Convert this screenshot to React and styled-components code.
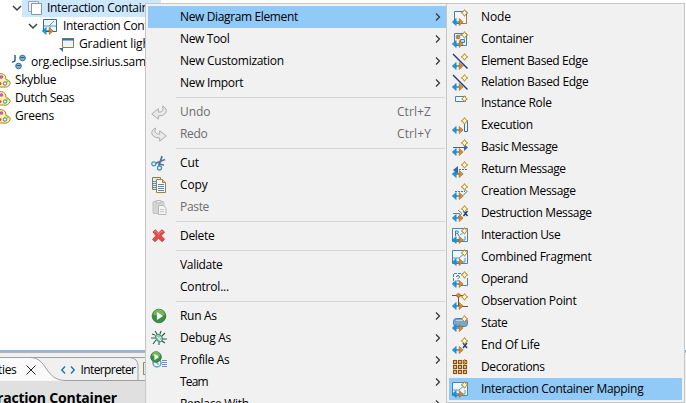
import React from 'react';
import styled, { createGlobalStyle, css } from 'styled-components';

const Global = createGlobalStyle`
  * { box-sizing: border-box; }
  body { margin: 0; background: #fff; overflow: hidden; }
`;

const Page = styled.div`
  position: relative;
  width: 686px;
  height: 403px;
  overflow: hidden;
  background: #fff;
  color: #000;
  font: 12px/16px "Open Sans", "Noto Sans", sans-serif;
  white-space: nowrap;
  display: flex;
  flex-direction: column;
`;

const Tree = styled.div`
  flex: 0 0 350px;
  width: 161px;
  overflow: hidden;
`;
const TreeRow = styled.div`
  display: flex;
  align-items: center;
  height: 18px;
  padding-left: ${(p) => p.$indent}px;
  &:first-child { margin-top: -1px; }
`;
const TreeContent = styled.div`
  display: flex;
  align-items: center;
  flex: 1;
  height: 18px;
  gap: ${(p) => p.$gap ?? 5}px;
  background: ${(p) => (p.$selected ? '#cce8ff' : 'transparent')};
  padding-left: ${(p) => p.$pad || 0}px;
`;
const Label = styled.span`
  letter-spacing: ${(p) => p.$track ?? -0.32}px;
  ${(p) => p.$disabled && css`color: #6d6d6d;`}
`;
const Svg = styled.svg`
  display: block;
  flex: none;
  overflow: visible;
`;
const Glyph = ({ children, w = 16, h = 16 }) => (
  <Svg width={w} height={h} viewBox={`0 0 ${w} ${h}`} fill="none">{children}</Svg>
);

const Panel = styled.div`
  width: 686px;
  flex: 1;
  border-top: 2px solid #99b4d1;
  box-shadow: inset 0 1px #b4b4b4;
  background: #f0f0f0;
  padding-top: 5px;
`;
const Tabs = styled.div`
  display: flex;
  position: relative;
  height: 24px;
  width: 146px;
`;
const TabArt = styled.svg`
  position: absolute;
  inset: 0;
`;
const TabText = styled.div`
  position: relative;
  display: flex;
  align-items: center;
  height: 26px;
  gap: ${(p) => p.$gap}px;
  margin-left: ${(p) => p.$left}px;
`;
const Heading = styled.div`
  height: 22px;
  width: 146px;
  overflow: hidden;
  background: #e0e0e0;
  padding-top: 7px;
  font-size: 14px;
  line-height: 20px;
  font-weight: 700;
  letter-spacing: -0.2px;
  text-indent: -3px;
`;

const Menu = styled.div`
  position: absolute;
  left: ${(p) => p.$left}px;
  top: 3px;
  width: ${(p) => p.$width}px;
  height: 400px;
  padding: 2px;
  overflow: hidden;
  background: #f1f1f1;
  border: 1px solid #c6c6c6;
  ${(p) => p.$cut && css`border-bottom: 0; padding-right: 0; border-right: 0;`}
`;
const Item = styled.div`
  display: flex;
  align-items: center;
  height: ${(p) => p.$h || 22}px;
  background: ${(p) => (p.$hot ? '#91c9f7' : 'transparent')};
  padding: 0 5px 0 3px;
`;
const IconSlot = styled.div`
  width: ${(p) => p.$w}px;
  flex: none;
`;
const Spacer = styled.div`flex: 1;`;
const Shortcut = styled.span`
  color: #6d6d6d;
  margin-right: 10px;
  letter-spacing: 0.1px;
`;
const Separator = styled.div`
  height: 7px;
  padding: 3px 1px 3px 28px;
  &::before { content: ''; display: block; height: 1px; background: #d5d5d5; }
`;

const Expander = () => (
  <Glyph w={10} h={8}><path d="M1 2l4 4 4-4" stroke="#404040" strokeWidth="1.5" /></Glyph>
);
const Submenu = () => (
  <Glyph w={6} h={10}><path d="M1 1.500L4.500 5 1 8.500" stroke="#333" strokeWidth="1.200" /></Glyph>
);

const Arrows = () => (
  <>
    <path d="M4 13h4" stroke="#1c4668" />
    <path d="M.2 13l4-3.600v7.200z" fill="#1599dc" stroke="#1273b0" strokeWidth=".5" />
    <path d="M11.200 13l-4-3.600v7.200z" fill="#d98b2d" stroke="#8b5a18" strokeWidth=".5" />
  </>
);
const Star = () => (
  <path d="M12.500.6l1.200 2 2.100 1.300-2.100 1.300-1.200 2.100-1.200-2.100-2.100-1.300 2.100-1.300z" fill="#fff7d2" stroke="#b58a20" strokeWidth="1" />
);
const Frame = () => <path d="M2.500 2.500h12v12h-12z" fill="#f4faff" stroke="#3e7fb5" />;

const bases = {
  node: <><Frame /><path d="M14.500 7v7.500H8" stroke="#a87e38" /></>,
  container: <><Frame /><circle cx="6" cy="6" r="2" fill="#d58a31" stroke="#935e20" strokeWidth=".6" /><path d="M8.500 8.500h4v3h-4zM7.500 4h3" fill="#b7dcf5" stroke="#3e7fb5" /></>,
  edge: <path d="M1 1l14.500 14.500" stroke="#203b85" strokeWidth="1.400" />,
  execution: <path d="M12.500 3.500h3v11h-3z" fill="#eaf5ff" stroke="#3b6cae" />,
  basic: <><path d="M1 8.500h12" stroke="#3b64aa" /><path d="M12 5l4 3.500-4 3.500z" fill="#3b64aa" /></>,
  returned: <><path d="M7 8.500h8" stroke="#4775b3" strokeDasharray="2 1" /><path d="M1 9l5-4v8z" fill="#3b64aa" /></>,
  creation: <><path d="M3 8.500h10" stroke="#4775b3" strokeDasharray="2 1" /><path d="M11 4.500l4 4-4 4" stroke="#4775b3" /></>,
  destruction: <><path d="M1 8.500h7M6 5l4 3.500L6 12" stroke="#5884ad" /><path d="M11.500 6l4 5m0-5l-4 5" stroke="#203b85" strokeWidth="1.500" /></>,
  use: <><path d="M.5 1.500h15v13H.5z" fill="#edf7ff" stroke="#4c83ac" /><path d="M3.500 9V4h2.300q1.200 1.200 0 2.300H3.500m2 0L7 9" stroke="#377bb2" /><path d="M8 8l5-4M5 13h8v-4" stroke="#5b98c6" /></>,
  fragment: <><path d="M.5 1.500h15v13H.5z" fill="#edf7ff" stroke="#4c83ac" /><path d="M1 9h6l6-5M8 13h5V9" stroke="#5b98c6" /></>,
  operand: <><path d="M1.500 14V2.500h13" stroke="#3a86bb" strokeDasharray="3 1" /><path d="M15.500 7v7.500H9" stroke="#4e82a7" /><path d="M4.500 6q0-1.500 1.700-1.500Q8 5 7.200 6.500L6 7.800M6 9v1.500" stroke="#23699e" /></>,
  observation: <><path d="M0 2.500h12M6.500 3v10M10 13.500h6" stroke="#6d5432" /><circle cx="6.500" cy="2.500" r="1.800" fill="#d9943f" stroke="#9b6421" /></>,
  state: <><rect x="1.500" y="3.500" width="14" height="8" rx="3" fill="#78a8cf" stroke="#477ba7" /><path d="M4 5.500h8" stroke="#b8d5ea" /></>,
  end: <path d="M11 6l4 5m0-5l-4 5" stroke="#203b85" strokeWidth="1.500" />,
};
const ToolIcon = ({ kind }) => {
  if (kind === 'instance') {
    return <Glyph><path d="M3.500 1.500h10v5h-10z" fill="#eef7ff" stroke="#4e80b5" /><path d="M12.500.8l1 1.700L15.300 4l-1.800 1-1 1.700-1-1.700L9.700 4l1.800-1.500z" fill="#fff3bf" stroke="#b58a20" /></Glyph>;
  }
  if (kind === 'decorations') {
    return (
      <Glyph>
        <path d="M0 0h16v16H0z" fill="#fff" />
        {[1.5, 6.5, 11.5].map((y) => [1.5, 6.5, 11.5].map((x) => (
          <rect key={`${x}-${y}`} x={x} y={y} width="3" height="3" fill="#ffe2a2" stroke="#875313" strokeWidth="1.300" />
        )))}
        <path d="M12.500 0v6M9.500 3h6" stroke="#c99c25" />
      </Glyph>
    );
  }
  return <Glyph>{bases[kind]}<Arrows /><Star /></Glyph>;
};

const PlayCircle = ({ r = 6.8, x = 8, y = 8 }) => (
  <>
    <circle cx={x} cy={y} r={r} fill="#379343" stroke="#257133" strokeWidth=".8" />
    <path d={`M${x - r + 1} ${y - 1}A${r - 1} ${r - 1} 0 0 1 ${x + r - 1} ${y - 1}z`} fill="#76b85b" />
    <path d={`M${x - r * 0.3} ${y - r * 0.6}L${x + r * 0.6} ${y}L${x - r * 0.3} ${y + r * 0.6}z`} fill="#fff" />
  </>
);
const UndoShape = () => <path d="M.8 10l6.500-5.300v3.500Q12 8.200 12 4.800L11.500 2Q17 5 14.500 9.200 12.300 12.200 7.300 12v3.200z" fill="#e9e9e9" stroke="#adadad" />;
const icons = {
  undo: <Glyph><UndoShape /></Glyph>,
  redo: <Glyph><g transform="translate(16 0) scale(-1 1)"><UndoShape /></g></Glyph>,
  cut: <Glyph><path d="M4 8.500l10-4M8 11l3-10M7 9l6 1" stroke="#53749c" strokeWidth="1.700" /><circle cx="2.800" cy="8.800" r="2" fill="#edf8ff" stroke="#4a91bd" strokeWidth="1.300" /><circle cx="8.500" cy="13" r="2" fill="#edf8ff" stroke="#4a91bd" strokeWidth="1.300" /></Glyph>,
  copy: <Glyph><path d="M1.500.5h8v12h-8z" fill="#dceefa" stroke="#927b45" /><path d="M2 4.500h3M2 6.500h3M2 8.500h3M2 10.500h3" stroke="#5a8fbd" /><path d="M5.500 2.500h6l3 3v10h-9z" fill="#f4faff" stroke="#a08138" /><path d="M11.500 2.500v3h3" fill="#e3c66f" stroke="#a08138" /><path d="M7 7.500h6M7 9.500h6M7 11.500h6M7 13.500h6" stroke="#5688b7" /></Glyph>,
  paste: <Glyph><rect x="2" y="2.500" width="11" height="12" rx="1" fill="#d5d5d5" stroke="#c0c0c0" /><path d="M5 3V1.500h5V4H5z" fill="#ececec" stroke="#b9b9b9" /><path d="M7.500 6.500h5l2.500 3v6H7.500z" fill="#f3f3f3" stroke="#b9b9b9" /><path d="M9 10.500h4M9 12.500h4" stroke="#c9c9c9" /></Glyph>,
  delete: <Glyph><path d="M2 4l2.200-2.200L7.500 5 11 1.800 13.500 4l-3.400 3.700 3.400 3.500-2.300 2.500-3.700-3.500L4 13.700 1.700 11.300 5 7.700z" fill="#e64b4b" stroke="#c13d41" strokeLinejoin="round" /><path d="M3 4l1.200-1 3.300 3.200L11 3l1.200 1" stroke="#f2867c" /></Glyph>,
  run: <Glyph><PlayCircle /></Glyph>,
  debug: <Glyph><path d="M4 5L1 4M4 8H0M5 10l-3 4M6 4L4 1M9 4l1-3M11 6l3-3M12 9h4M11 11l3 2M8 12v3" stroke="#285d51" strokeWidth="1.100" /><ellipse cx="8" cy="8" rx="3" ry="4" transform="rotate(-40 8 8)" fill="#9bcdb3" stroke="#438878" /><path d="M6 7l4 4M7 9l3-2" stroke="#e7f7e9" /></Glyph>,
  profile: <Glyph><circle cx="6" cy="11" r="4" fill="#eaf5ff" stroke="#6b9ebd" strokeWidth="1.500" /><path d="M6 9v3h2M11 8.500h5M11 10.500h5M11 12.500h5M11 14.500h5" stroke="#6d91be" /><PlayCircle x={5} y={5} r={5.3} /></Glyph>,
};

const Palette = () => (
  <Glyph w={11} h={15}>
    <path d="M-3 1.500Q2-1 5.500 3L6 6.500q5 1 4 4.500-2 4-7 3H-3z" fill="#fff5a0" stroke="#a2852e" />
    <circle cx="1.500" cy="4" r="1.800" fill="#c35ac4" />
    <circle cx="0" cy="10.500" r="1.500" fill="#e94545" />
    <circle cx="5" cy="10.500" r="1.700" fill="#fff" stroke="#2d78bb" />
    <circle cx="7.500" cy="8.300" r="1.200" fill="#a7c95d" />
  </Glyph>
);

const mainItems = [
  { t: 'New Diagram Element', arrow: 1, hot: 1, track: -0.37 }, { t: 'New Tool', arrow: 1, track: -0.37 },
  { t: 'New Customization', arrow: 1, track: -0.28 }, { t: 'New Import', arrow: 1 }, null,
  { t: 'Undo', icon: 'undo', off: 1, key: 'Ctrl+Z', track: -0.1 }, { t: 'Redo', icon: 'redo', off: 1, key: 'Ctrl+Y' }, null,
  { t: 'Cut', icon: 'cut', track: -0.1 }, { t: 'Copy', icon: 'copy', track: -0.1 }, { t: 'Paste', icon: 'paste', off: 1 }, null,
  { t: 'Delete', icon: 'delete' }, null,
  { t: 'Validate' }, { t: 'Control...', track: -0.2 }, null,
  { t: 'Run As', icon: 'run', arrow: 1 }, { t: 'Debug As', icon: 'debug', arrow: 1, track: -0.25 },
  { t: 'Profile As', icon: 'profile', arrow: 1 }, { t: 'Team', arrow: 1, track: -0.8 }, { t: 'Replace With', arrow: 1 },
];
const tools = [
  { t: 'Node', kind: 'node', track: -0.1 },
  { t: 'Container', kind: 'container' },
  { t: 'Element Based Edge', kind: 'edge', track: -0.38 },
  { t: 'Relation Based Edge', kind: 'edge', h: 20 },
  { t: 'Instance Role', kind: 'instance' },
  { t: 'Execution', kind: 'execution' },
  { t: 'Basic Message', kind: 'basic' },
  { t: 'Return Message', kind: 'returned', track: -0.38 },
  { t: 'Creation Message', kind: 'creation' },
  { t: 'Destruction Message', kind: 'destruction', track: -0.35 },
  { t: 'Interaction Use', kind: 'use', track: -0.4 },
  { t: 'Combined Fragment', kind: 'fragment', track: -0.24 },
  { t: 'Operand', kind: 'operand', track: -0.45 },
  { t: 'Observation Point', kind: 'observation' },
  { t: 'State', kind: 'state', track: -0.45 },
  { t: 'End Of Life', kind: 'end', track: -0.2 },
  { t: 'Decorations', kind: 'decorations', track: -0.35 },
  { t: 'Interaction Container Mapping', kind: 'fragment', hot: true, track: -0.31 },
];

export default function App() {
  return (
    <Page>
      <Global />
      <Tree>
        <TreeRow $indent={12}>
          <Expander />
          <TreeContent $selected $pad={6}>
            <Glyph w={14} h={14}><path d="M.5.5h10v10H.5z" fill="#eef2f6" stroke="#9aa3ad" /><path d="M3.500 2.500h10v11h-10z" fill="#fff" stroke="#8b96a3" /></Glyph>
            <Label>Interaction Container</Label>
          </TreeContent>
        </TreeRow>
        <TreeRow $indent={28}>
          <Expander />
          <TreeContent $pad={4}>
            <Glyph><path d="M1.500 1.500h13v12h-13z" fill="#edf7ff" stroke="#356b96" /><path d="M2 8h5l5-5M8 13V8h6" stroke="#5b98c6" /><Arrows /></Glyph>
            <Label>Interaction Container</Label>
          </TreeContent>
        </TreeRow>
        <TreeRow $indent={59}>
          <TreeContent>
            <Glyph w={15} h={15}><path d="M3.500 1.500h11v9h-11z" fill="#eaf5fd" stroke="#987b3b" /><path d="M3 2.500h12" stroke="#3570aa" strokeWidth="2" /><path d="M0 11h4v4z" fill="#276d9d" /></Glyph>
            <Label $track={-0.1}>Gradient light blue</Label>
          </TreeContent>
        </TreeRow>
        <TreeRow $indent={12}>
          <TreeContent>
            <Glyph w={14} h={16}><path d="M3 1v5q0 2-3 2" stroke="#315e89" strokeWidth="1.500" /><circle cx="10.500" cy="4" r="2.800" fill="#78b7dc" stroke="#376b91" /><circle cx="6.500" cy="12" r="2.800" fill="#78b7dc" stroke="#376b91" /><path d="M8.500 3.500h4M4.500 11.500h4" stroke="#345b79" /></Glyph>
            <Label $track={-0.22}>org.eclipse.sirius.sample</Label>
          </TreeContent>
        </TreeRow>
        {['Skyblue', 'Dutch Seas', 'Greens'].map((name) => (
          <TreeRow key={name} $indent={0}>
            <TreeContent $gap={4}><Palette /><Label $track={name === 'Greens' ? -0.2 : -0.3}>{name}</Label></TreeContent>
          </TreeRow>
        ))}
      </Tree>

      <Panel>
        <Tabs>
          <TabArt width="146" height="24" fill="none">
            <path d="M0 .5h30C48 .5 44 23.500 66 23.500H0z" fill="#fafafa" />
            <path d="M0 .5h146M30 .5C48 .5 44 23.500 66 23.500h80M130 .5q8 1 8 8v15" stroke="#a0a0a0" />
            <path d="M143.500 5.500h6v12h-6z" fill="#dcecf5" stroke="#8b8b61" />
          </TabArt>
          <TabText $left={-2} $gap={10}>
            <Label>ties</Label>
            <Glyph w={10} h={10}><path d="M.5.5l9 9m0-9l-9 9" stroke="#222" /></Glyph>
          </TabText>
          <TabText $left={25} $gap={5}>
            <Glyph w={14} h={8}><path d="M4 .5L.8 4 4 7.500M10 .5L13.200 4 10 7.500" stroke="#1777b7" strokeWidth="1.400" /></Glyph>
            <Label $track={-0.6}>Interpreter</Label>
          </TabText>
        </Tabs>
        <Heading>raction Container</Heading>
      </Panel>

      <Menu $left={145} $width={301} $cut>
        {mainItems.map((m, i) => (m ? (
          <Item key={m.t} $hot={m.hot}>
            <IconSlot $w={29}>{m.icon && icons[m.icon]}</IconSlot>
            <Label $disabled={m.off} $track={m.track}>{m.t}</Label>
            <Spacer />
            {m.key && <Shortcut>{m.key}</Shortcut>}
            {m.arrow && <Submenu />}
          </Item>
        ) : <Separator key={i} />))}
      </Menu>

      <Menu $left={446} $width={239}>
        {tools.map(({ t, kind, h, hot, track }) => (
          <Item key={t} $h={h} $hot={hot}>
            <IconSlot $w={29}><ToolIcon kind={kind} /></IconSlot>
            <Label $track={track}>{t}</Label>
          </Item>
        ))}
      </Menu>
    </Page>
  );
}
